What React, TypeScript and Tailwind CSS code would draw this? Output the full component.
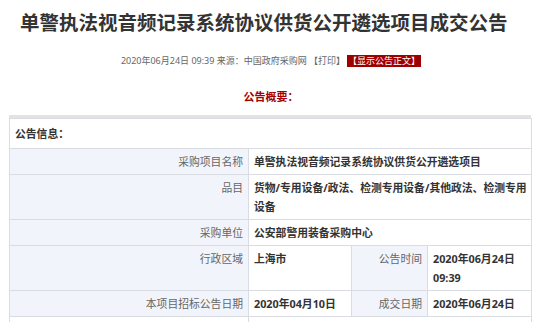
import React from "react";

type Row =
  | { kind: "full"; label: string; value: React.ReactNode }
  | { kind: "split"; label: string; value: string; label2: string; value2: string };

const rows: Row[] = [
  { kind: "full", label: "采购项目名称", value: "单警执法视音频记录系统协议供货公开遴选项目" },
  {
    kind: "full",
    label: "品目",
    value: (
      <>
        <span className="whitespace-nowrap">货物/专用设备/政法、检测专用设备/其他政法、检测专用</span>
        <br />
        设备
      </>
    ),
  },
  { kind: "full", label: "采购单位", value: "公安部警用装备采购中心" },
  {
    kind: "split",
    label: "行政区域",
    value: "上海市",
    label2: "公告时间",
    value2: "2020年06月24日 09:39",
  },
  {
    kind: "split",
    label: "本项目招标公告日期",
    value: "2020年04月10日",
    label2: "成交日期",
    value2: "2020年06月24日",
  },
];

const labelCls =
  "border border-[#d9dce3] bg-[#f2f4fb] text-right align-top text-[#666] font-normal px-[5px] py-[3px]";
const valueCls =
  "border border-[#d9dce3] bg-white text-left align-top text-[#333] font-bold px-[5px] py-[3px]";

const App = () => {
  return (
    <div
      className="w-[542px] h-[331px] overflow-hidden bg-white"
      style={{ fontFamily: '"Noto Sans", "Noto Sans CJK SC", sans-serif' }}
    >
      {/* Title */}
      <h1 className="pl-[20px] pt-[9px] text-[19.5px] leading-[28px] font-bold text-[#333] whitespace-nowrap">
        单警执法视音频记录系统协议供货公开遴选项目成交公告
      </h1>

      {/* Meta line */}
      <div className="mt-[18px] flex justify-center items-center text-[9px] leading-[12px] text-[#666] whitespace-nowrap">
        <span>2020年06月24日 09:39 来源：中国政府采购网 【打印】</span>
        <span className="ml-[2px] bg-[#9e0000] text-white px-[1px]">【显示公告正文】</span>
      </div>

      {/* Summary heading */}
      <div className="mt-[23px] text-center text-[11px] leading-[14px] font-bold text-[#a30000]">
        公告概要：
      </div>

      {/* Info table */}
      <div className="mt-[11px] px-[9px]">
        <div className="w-[522px] border-t-[3px] border-[#e3e3e3]">
          <table className="w-[522px] table-fixed border-collapse text-[10.8px] leading-[19px]">
            <colgroup>
              <col className="w-[239px]" />
              <col className="w-[103px]" />
              <col className="w-[76px]" />
              <col className="w-[104px]" />
            </colgroup>
            <tbody>
              <tr>
                <td
                  colSpan={4}
                  className="border border-[#d9dce3] bg-white text-[#333] font-bold px-[5px] py-[5px] leading-[19px]"
                >
                  公告信息：
                </td>
              </tr>
              {rows.map((row) =>
                row.kind === "full" ? (
                  <tr key={row.label}>
                    <td className={labelCls}>{row.label}</td>
                    <td colSpan={3} className={valueCls}>
                      {row.value}
                    </td>
                  </tr>
                ) : (
                  <tr key={row.label}>
                    <td className={labelCls}>{row.label}</td>
                    <td className={valueCls}>{row.value}</td>
                    <td className={labelCls}>{row.label2}</td>
                    <td className={valueCls}>{row.value2}</td>
                  </tr>
                )
              )}
              <tr>
                <td className="h-[5px] border-x border-t border-[#d9dce3] bg-white" />
                <td colSpan={3} className="h-[5px] border-x border-t border-[#d9dce3] bg-white" />
              </tr>
            </tbody>
          </table>
        </div>
      </div>
    </div>
  );
};

export default App;
